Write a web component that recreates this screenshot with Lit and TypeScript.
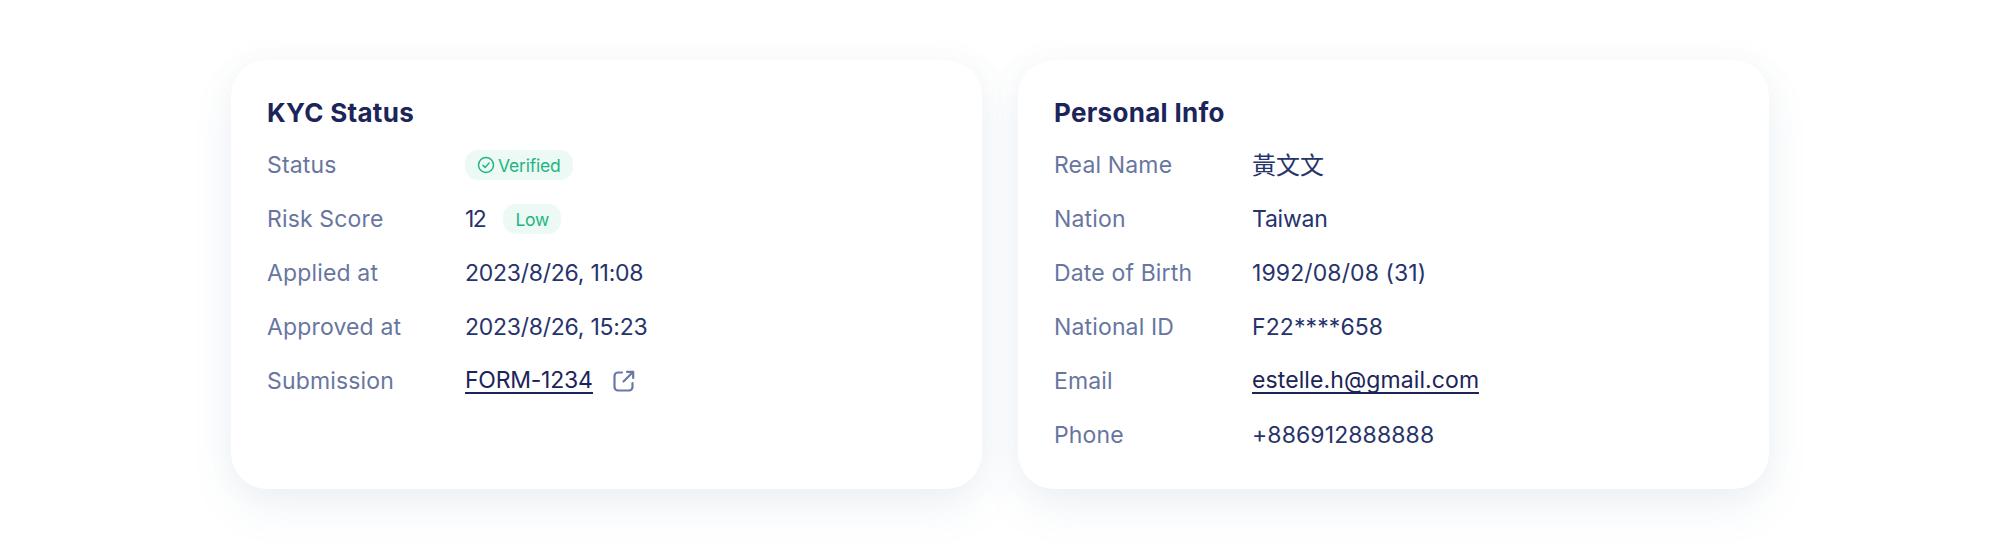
import { LitElement, html, css } from "lit";
import { customElement } from "lit/decorators.js";

const checkIcon = html`<svg class="check" viewBox="0 0 18 18" fill="none" stroke="currentColor" stroke-width="1.5" stroke-linecap="round" stroke-linejoin="round"><circle cx="9" cy="9" r="7.5"></circle><path d="M5.9 9.2l2.2 2.2 4-4.3"></path></svg>`;
const extIcon = html`<svg class="ext" viewBox="0 0 22 22" fill="none" stroke="currentColor" stroke-width="2.2" stroke-linecap="round" stroke-linejoin="round"><path d="M9 2.5H5a3.5 3.5 0 0 0-3.5 3.5v11A3.5 3.5 0 0 0 5 20.5h11a3.5 3.5 0 0 0 3.5-3.5v-4"></path><path d="M10.5 11.5L20 2M14 1.8h6.2V8"></path></svg>`;

@customElement("app-root")
export class AppRoot extends LitElement {
  static styles = css`
    :host { display: block; background: #fff; height: 548px; overflow: hidden; font-family: Inter, "Noto Sans CJK TC", sans-serif; }
    .wrap { display: flex; justify-content: center; gap: 36px; padding-top: 60px; }
    .card { width: 751px; height: 429px; box-sizing: border-box; background: #fff; border-radius: 36px; padding: 31px 36px 0;
      box-shadow: 0 20px 40px rgba(112,144,176,.10), 0 0 30px rgba(112,144,176,.06); }
    h2 { margin: 0 0 3px; height: 44px; line-height: 44px; font-size: 26px; font-weight: 700; color: #1b2559; letter-spacing: .3px; }
    .row { display: flex; align-items: center; height: 54px; font-size: 23px; letter-spacing: -.25px; }
    .label { width: 198px; color: #68769f; font-weight: 400; letter-spacing: .15px; }
    .value { color: #27336b; display: flex; align-items: center; }
    .wide { letter-spacing: .1px; }
    .score { letter-spacing: -1.5px; }
    .cjk { font-family: "Noto Sans CJK TC", sans-serif; font-size: 24px; line-height: 24px; letter-spacing: 0; margin-top: -3px; }
    a { color: #1b2559; text-decoration: none; border-bottom: 2px solid #1b2559; line-height: 24px; height: 24px; }
    .badge { display: inline-flex; align-items: center; height: 30px; border-radius: 13px; background: #edf9f5; color: #22b57f; font-size: 17.5px; letter-spacing: -.2px; }
    .verified { padding: 0 12px; gap: 3px; }
    .low { padding: 0 12px; margin-left: 18px; }
    .check { width: 18px; height: 18px; }
    .ext { width: 22px; height: 22px; color: #6b7aa5; margin-left: 20px; }
  `;
  private row(label: string, value: unknown) {
    return html`<div class="row"><div class="label">${label}</div><div class="value">${value}</div></div>`;
  }
  render() {
    return html`<div class="wrap">
      <section class="card">
        <h2>KYC Status</h2>
        ${this.row("Status", html`<span class="badge verified">${checkIcon}Verified</span>`)}
        ${this.row("Risk Score", html`<span class="score">12</span><span class="badge low">Low</span>`)}
        ${this.row("Applied at", "2023/8/26, 11:08")}
        ${this.row("Approved at", "2023/8/26, 15:23")}
        ${this.row("Submission", html`<a>FORM-1234</a>${extIcon}`)}
      </section>
      <section class="card">
        <h2>Personal Info</h2>
        ${this.row("Real Name", html`<span class="cjk">黃文文</span>`)}
        ${this.row("Nation", "Taiwan")}
        ${this.row("Date of Birth", html`<span class="wide">1992/08/08 (31)</span>`)}
        ${this.row("National ID", html`<span class="wide">F22****658</span>`)}
        ${this.row("Email", html`<a class="wide">estelle.h@gmail.com</a>`)}
        ${this.row("Phone", html`<span class="wide">+886912888888</span>`)}
      </section>
    </div>`;
  }
}
